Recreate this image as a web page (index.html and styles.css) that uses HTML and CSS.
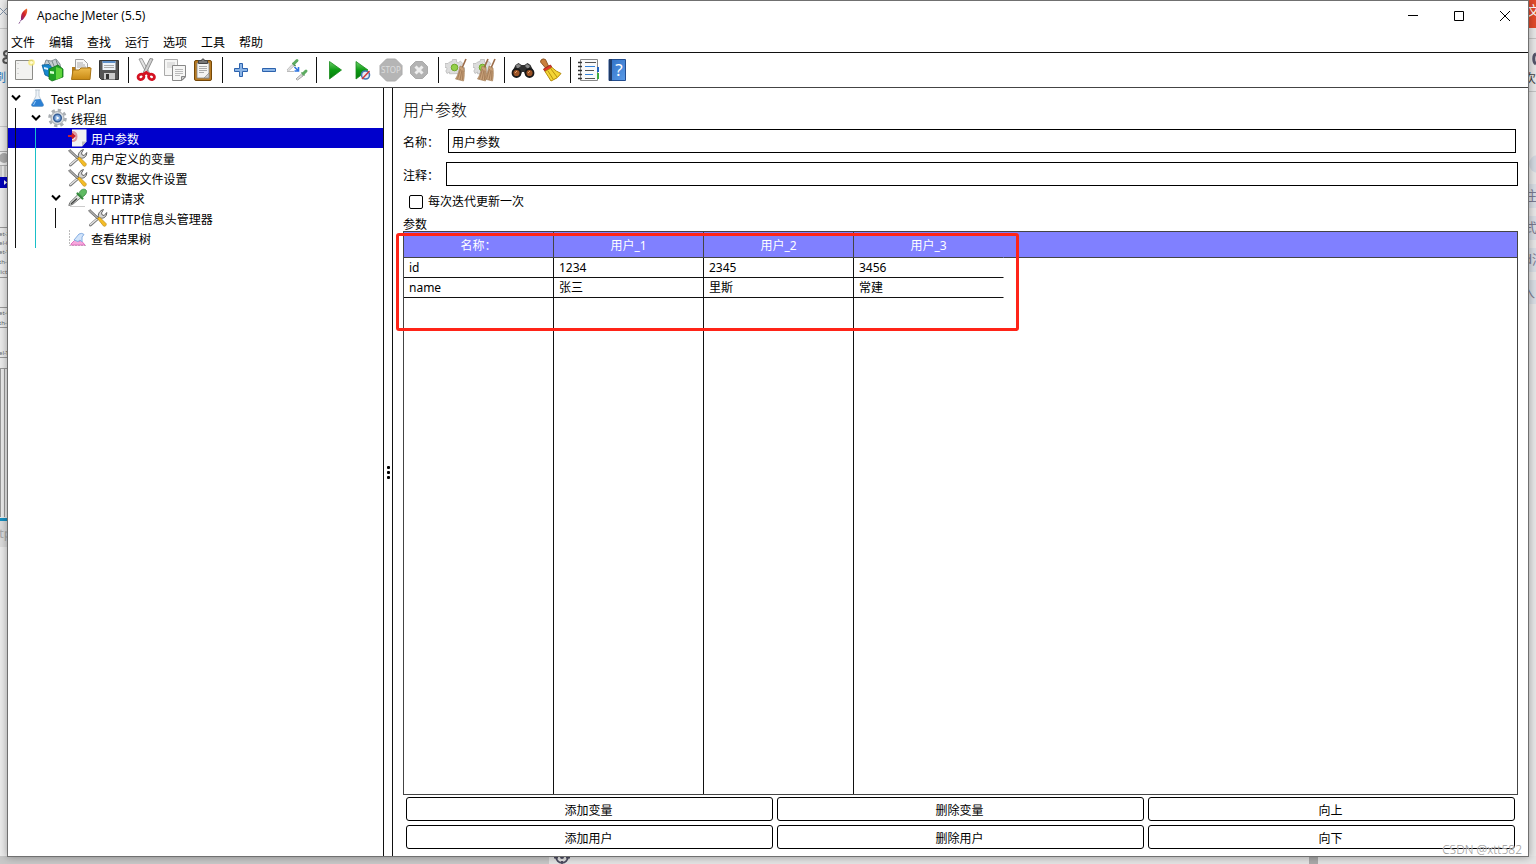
FILE: index.html
```html
<!DOCTYPE html>
<html lang="zh-CN">
<head>
<meta charset="utf-8">
<title>Apache JMeter (5.5)</title>
<link rel="stylesheet" href="styles.css">
</head>
<body>
<svg class="defs" aria-hidden="true">
  <defs>
    <linearGradient id="g-green" x1="0" y1="0" x2="0" y2="1"><stop offset="0" stop-color="#6fcf6a"/><stop offset=".5" stop-color="#0b9a12"/><stop offset="1" stop-color="#067a0c"/></linearGradient>
    <linearGradient id="g-folder" x1="0" y1="0" x2="0" y2="1"><stop offset="0" stop-color="#eebb4c"/><stop offset="1" stop-color="#c98a14"/></linearGradient>
    <linearGradient id="g-book" x1="0" y1="0" x2="1" y2="1"><stop offset="0" stop-color="#2f6fc4"/><stop offset="1" stop-color="#5a9be8"/></linearGradient>
    <linearGradient id="g-feather" x1="0" y1="1" x2="1" y2="0"><stop offset="0" stop-color="#7a2a86"/><stop offset=".5" stop-color="#d22128"/><stop offset="1" stop-color="#f0772a"/></linearGradient>
    <symbol id="i-tools" viewBox="0 0 20 20">
      <path d="M2.500 17 11 9.500" stroke="#777" stroke-width="3" stroke-linecap="round"/>
      <path d="M2.500 16.500 11.500 9" stroke="#e4e4e4" stroke-width="1.500" stroke-linecap="round"/>
      <path d="M10.500 9.500c-1-3 1-7 5-8l-2 3.500.7 2 2 .5 2.500-3c.3 4-3 6.500-6.500 5.500z" fill="#d4d4d4" stroke="#555" stroke-width=".9"/>
      <path d="M.5 3 2 1.500l8.500 8L9.300 11z" fill="#aaa" stroke="#555" stroke-width=".7"/>
      <path d="m9.500 10.500 2-1.500 6.500 6.500c1 1.500-1 3.700-2.500 2.500z" fill="#f5bd25" stroke="#b98a18" stroke-width=".7"/>
    </symbol>
    <symbol id="i-dropper" viewBox="0 0 20 20">
      <path d="M2 18.500h15" stroke="#ccc"/>
      <path d="m.8 17.500 1-3L10 6.500l3 3-8.500 7z" fill="#e3e7e3" stroke="#666" stroke-width=".9"/>
      <path d="m3 16 6-5.500" stroke="#444" stroke-width="1.600"/>
      <path d="m9.500 5.500 5 5" stroke="#348a3c" stroke-width="2.200" stroke-linecap="round"/>
      <path d="M11 5.500C12 2 15 .5 17.300 1.500s1.500 5-2.800 7.500z" fill="#5fbb62" stroke="#398640" stroke-width=".8"/>
    </symbol>
    <symbol id="i-broom" viewBox="0 0 24 24">
      <path d="m21 1-4 9" stroke="#9a6a46" stroke-width="1.600"/>
      <path d="m15 8 4 2c.5 4 .5 9-.5 13l-8-2c2.500-4 3.500-8 4.500-13z" fill="#c8a078" stroke="#a07850" stroke-width=".6"/>
      <path d="m15.500 11-3 10M17 12l-2 10M18 13l-.5 9" stroke="#8e6846" stroke-width=".6"/>
    </symbol>
    <symbol id="i-cog" viewBox="0 0 24 24">
      <g fill="#dcdcdc" stroke="#b4b4b4" stroke-width=".7"><path d="M7.500 1.500h4V4l2 .8 1.800-1.800 2.700 2.700-1.800 1.800.8 2h2.500v4H17l-.8 2-11.700.3L4.500 14 2 15.500.8 13 2 11l-.5-1.500H0v-4h3L4.500 4 7 3.500z"/></g>
      <circle cx="9.500" cy="9.500" r="3.300" fill="#93cf4a" stroke="#6fa82a"/>
    </symbol>
  </defs>
</svg>

<div class="desktop">
  <svg class="edge edge-left" width="8" height="864" aria-hidden="true">
    <rect width="8" height="864" fill="#ececec"/>
    <path d="M0 28.500h8M0 126.500h8" stroke="#c8c8c8"/>
    <path d="M0 8 7 15M7 8 0 15" stroke="#8192a8"/>
    <path d="M7 51c-4 0-4 5 0 5M7 58c-5 0-5 5 0 5" fill="none" stroke="#555" stroke-width="2"/>
    <text x="-6" y="82" font-size="12" fill="#2d7fc0">刷</text>
    <circle cx="4" cy="158" r="5" fill="#aaa"/>
    <path d="M0 151.500h8M0 165.500h8M1 166v11M5 166v11" stroke="#aaa"/>
    <rect y="177" width="8" height="11" fill="#0000b8"/><path d="m4 180 3 2.500-3 2.500z" fill="#fff"/>
    <g font-size="6" fill="#666"><text x="-1" y="236">et-X</text><text x="-1" y="245">el-C</text><text x="-1" y="254">et-V</text><text x="-1" y="264">th-C</text><text x="-1" y="274">lict</text><text x="-1" y="315">et-C</text><text x="-1" y="325">th-C</text><text x="-1" y="355">el-T</text></g>
    <path d="M0 227.500h8M0 277.500h8M0 307.500h8M0 327.500h8M0 357.500h8M0 368.500h8M.5 369v148M4.500 369v148" stroke="#999"/>
    <rect y="518" width="8" height="3" fill="#168fc0"/>
    <rect y="521" width="8" height="26" fill="#dcdcdc"/>
    <text x="-1" y="538" font-size="13" fill="#aaa">tp</text>
  </svg>
  <svg class="edge edge-right" width="8" height="864" aria-hidden="true">
    <rect width="8" height="864" fill="#e8e8e8"/>
    <rect width="8" height="28" fill="#e24a2b"/>
    <text x="-1" y="15" font-size="13" fill="#fff">文</text>
    <path d="M0 38.500h8M0 91.500h8" stroke="#c4c4c4"/>
    <path d="M8 54c-3 1-3 8 0 10" fill="none" stroke="#55556a" stroke-width="3"/>
    <text x="-4" y="83" font-size="12" fill="#444">次</text>
    <circle cx="10" cy="164" r="9" fill="#d4dae2"/>
    <path d="M0 184h8v24H0zM0 216h8v24H0zM0 248h8v24H0zM0 280h8v24H0z" fill="#d9dee5"/>
    <g font-size="13" fill="#7b7b92"><text x="-4" y="200">注</text><text x="-4" y="232">式</text><text x="-4" y="264">d消</text><text x="-6" y="297">入</text></g>
  </svg>
  <div class="edge-bottom" aria-hidden="true">
    <div class="dock"><svg width="16" height="8" viewBox="0 0 16 8"><path d="M2 0c0 9 12 9 12 0M0 1.500h4M12 1.500h4M8 5v3" fill="none" stroke="#4c4c60" stroke-width="2"/><circle cx="8" cy="1" r="2" fill="#4c4c60"/></svg></div>
    <div class="dock-mark"></div>
  </div>

  <main class="window">
    <header class="titlebar">
      <svg class="logo" viewBox="0 0 14 18"><path d="M5 13c-.5-5 1-9 6-11.500 1 4-1.500 8-4.500 11.500z" fill="url(#g-feather)"/><path d="m3 16.500 2.500-4" stroke="#6a2b78" stroke-dasharray="1.500 1"/></svg>
      <h1 class="caption">Apache JMeter (5.5)</h1>
      <div class="window-controls">
        <button type="button" aria-label="最小化"><svg viewBox="0 0 12 12"><path d="M1 5.500h10"/></svg></button>
        <button type="button" aria-label="最大化"><svg viewBox="0 0 12 12"><path d="M1.500 1.500h9v9h-9z"/></svg></button>
        <button type="button" aria-label="关闭"><svg viewBox="0 0 12 12"><path d="m1 1 10 10M11 1 1 11"/></svg></button>
      </div>
    </header>

    <nav class="menubar">
      <button type="button">文件</button><button type="button">编辑</button><button type="button">查找</button><button type="button">运行</button><button type="button">选项</button><button type="button">工具</button><button type="button">帮助</button>
    </nav>

    <div class="toolbar" role="toolbar">
      <button type="button" aria-label="新建"><svg viewBox="0 0 24 24"><path d="M2.500 2.500h17v19h-17z" fill="#f2f2f0" stroke="#8c8c88"/><path d="M5 5v15" stroke="#bbb" stroke-dasharray="1 4"/><circle cx="18.500" cy="4.500" r="3.300" fill="#f6e76a" opacity=".75"/><circle cx="18.500" cy="4.500" r="1.600" fill="#fffbd0"/></svg></button>
      <button type="button" aria-label="模板"><svg viewBox="0 0 24 24"><path d="m3 8 2-6 5 1 5-2 4 5 1 6H4z" fill="#c5cdd2" stroke="#6d7a82" stroke-width=".8"/><path d="m7 3 3 5M11 3l2 5M15 2l2 6" stroke="#778888"/><path d="m1 7 7-.5 3 3V20l-7-3z" fill="#1687cf" stroke="#0a5b94" stroke-width=".8"/><path d="m3 9 4 1v2l-4-1z" fill="#d8efff"/><path d="m8 11 9-4 5 4v8l-11 4-3-2z" fill="#1fa024" stroke="#14741a" stroke-width=".8"/><path d="m15 9 6 2v8l-6 3z" fill="#5fd53c"/><path d="m9 13 4 .5V16l-4-.5z" fill="#d7ffd0"/></svg></button>
      <button type="button" aria-label="打开"><svg viewBox="0 0 24 24"><path d="M3 9h18v12H3z" fill="#b67c1c"/><path d="M6.500 1.500h8l4 4V14h-12z" fill="#f7f7f7" stroke="#888" stroke-width=".8"/><path d="M8 5h6M8 7h8M8 9h9" stroke="#aaa"/><path d="M2.500 21.500 4 12h6l2-2h10l-1 11.500z" fill="url(#g-folder)" stroke="#a87415"/></svg></button>
      <button type="button" aria-label="保存"><svg viewBox="0 0 24 24"><path d="M2.500 2.500h19v19h-17l-2-2z" fill="#555" stroke="#333"/><path d="M5.500 3h13v9h-13z" fill="#eef3f8"/><path d="M5.500 3h13v2h-13z" fill="#5d8fc8"/><path d="M7 7.500h10M7 9.500h10" stroke="#aaa"/><path d="M7 15h11v6.500H7z" fill="#ccc"/><path d="M9 16h3v5H9z" fill="#333"/></svg></button>
      <span class="sep"></span>
      <button type="button" aria-label="剪切"><svg viewBox="0 0 24 24"><path d="m4 1 3-.5L14.500 15 12 16.500z" fill="#e4e4e4" stroke="#888" stroke-width=".8"/><path d="m18 1-3-.5L8 15l2.500 1.500z" fill="#d0d0d0" stroke="#777" stroke-width=".8"/><g fill="none" stroke="#d41222" stroke-width="2.800"><ellipse cx="6" cy="18.800" rx="3" ry="2.600" transform="rotate(-25 6 18.800)"/><ellipse cx="16.500" cy="18.800" rx="3" ry="2.600" transform="rotate(25 16.500 18.800)"/><path d="m7.500 17 3.800-2.500L15 17"/></g></svg></button>
      <button type="button" aria-label="复制"><svg viewBox="0 0 24 24"><path d="M1.500 1.500h13v16h-13z" fill="#f6f6f5" stroke="#aaa"/><path d="M4 5h8M4 7h8M4 9h5" stroke="#ccc"/><path d="M9.500 7.500h13V19L19 22.500H9.500z" fill="#f6f6f5" stroke="#888"/><path d="M12 11.500h8M12 13.500h8M12 15.500h8M12 17.500h5" stroke="#bbb"/><path d="M22.500 18.500h-4v4z" fill="#ccc" stroke="#888"/></svg></button>
      <button type="button" aria-label="粘贴"><svg viewBox="0 0 24 24"><rect x="3.500" y="2.500" width="17" height="20" rx="1.500" fill="#b77a22" stroke="#744808"/><path d="M6 5h12v15H6z" fill="#f4f4f2" stroke="#888" stroke-width=".8"/><path d="M8 8.500h8M8 10.500h8M8 12.500h8M8 14.500h5" stroke="#aaa"/><path d="M7.500 5.500v-3h3c0-2 3-2 3 0h3v3z" fill="#777" stroke="#444"/><path d="M18 15v5h-5z" fill="#ccc" stroke="#888" stroke-width=".7"/></svg></button>
      <span class="sep"></span>
      <button type="button" aria-label="展开"><svg viewBox="0 0 24 24"><path d="M10.500 5.500h3v5h5v3h-5v5h-3v-5h-5v-3h5z" fill="#8ab4e6" stroke="#2c62ad"/></svg></button>
      <button type="button" aria-label="折叠"><svg viewBox="0 0 24 24"><path d="M5.500 10.500h13v3h-13z" fill="#8ab4e6" stroke="#2c62ad"/></svg></button>
      <button type="button" aria-label="切换"><svg viewBox="0 0 24 24"><path d="m2 12 5-5.500L9 8l-5.500 5z" fill="#e2e2e2" stroke="#b0b0b0" stroke-width=".7"/><path d="m7.500 5 3 3" stroke="#438746" stroke-width="1.500"/><path d="m9 5.500 3-3" stroke="#5cab60" stroke-width="3" stroke-linecap="round"/><path d="M2 13.500h7" stroke="#bbb"/><path d="m9.500 9 4 4m0-4v4h-4" fill="none" stroke="#2f74e0" stroke-width="1.600"/><path d="m11 21 5-4.500 2 1.500-5.500 4z" fill="#e2e2e2" stroke="#888" stroke-width=".7"/><path d="m16.500 14.500 3 3" stroke="#438746" stroke-width="1.500"/><path d="m18.500 15.500 2.500-2.500" stroke="#5cab60" stroke-width="3" stroke-linecap="round"/></svg></button>
      <span class="sep"></span>
      <button type="button" aria-label="启动"><svg viewBox="0 0 24 24"><path d="m6.500 3.500 12 8.500-12 9z" fill="url(#g-green)" stroke="#188c1c" stroke-width=".8"/></svg></button>
      <button type="button" aria-label="不停顿开始"><svg viewBox="0 0 24 24"><path d="m5 3.500 12 8.500-12 9z" fill="url(#g-green)" stroke="#188c1c" stroke-width=".8"/><circle cx="14.500" cy="17" r="4" fill="#e6edf6" stroke="#4676b5" stroke-width="1.600"/><path d="m11 21 7.500-8" stroke="#d33838" stroke-width="1.500"/></svg></button>
      <button type="button" aria-label="停止" disabled><svg viewBox="0 0 24 24"><path d="M7.500 1h9L23 7.500v9L16.500 23h-9L1 16.500v-9z" fill="#b5b5b5" stroke="#aaa"/><text x="12" y="15" text-anchor="middle" font-size="8" fill="#dddddd">STOP</text></svg></button>
      <button type="button" aria-label="关闭线程" disabled><svg viewBox="0 0 24 24"><path d="M8.500 3.500h7l5 5v7l-5 5h-7l-5-5v-7z" fill="#b3b3b3" stroke="#aaa"/><path d="m8.500 8.500 7 7m0-7-7 7" stroke="#eee" stroke-width="3"/></svg></button>
      <span class="sep"></span>
      <button type="button" aria-label="清除"><svg viewBox="0 0 24 24"><use href="#i-cog" width="24" height="24"/><use href="#i-broom" width="24" height="24"/></svg></button>
      <button type="button" aria-label="清除全部"><svg viewBox="0 0 24 24"><use href="#i-cog" width="24" height="24"/><use href="#i-broom" x="-6" width="24" height="24"/><use href="#i-broom" x="1" width="24" height="24"/></svg></button>
      <span class="sep"></span>
      <button type="button" aria-label="搜索"><svg viewBox="0 0 24 24"><path d="M1 14 4.500 7l3-2 3 2h3l3-2 3 2 3.500 7v3l-8 1-2-4h-2l-2 4-8-1z" fill="#303030"/><path d="m5 7 3-1 2 2-4 3zM14 8l2-2 3 2-2 3z" fill="#888"/><circle cx="5.500" cy="15" r="4" fill="#9a5225" stroke="#181818" stroke-width="1.800"/><circle cx="18.500" cy="15" r="4" fill="#9a5225" stroke="#181818" stroke-width="1.800"/><path d="m4 15 2-2m11 2 2-2" stroke="#eaa36b"/></svg></button>
      <button type="button" aria-label="重置搜索"><svg viewBox="0 0 24 24"><path d="M2 2q2-2 4.500-.5l3 6.500-3 2-5-6z" fill="#c9803e" stroke="#7e4617" stroke-width=".8"/><path d="m4.500 11 7-4 1.500 2.500-7 4z" fill="#e03a28" stroke="#981b10" stroke-width=".8"/><path d="m6 13.500 7-4q4 4 9 6-3 5-10 7.500-3-5-6-9.500z" fill="#f4d535" stroke="#b58c0d"/><path d="m9 13 5 8m-2-10 6 8" stroke="#b9920c"/></svg></button>
      <span class="sep"></span>
      <button type="button" aria-label="函数助手"><svg viewBox="0 0 24 24"><path d="M3.500 1.500h17v21h-17z" fill="#fafafa" stroke="#888"/><path d="M1 4.500h4M1 8.500h4M1 12.500h4M1 16.500h4M1 20.500h4" stroke="#333" stroke-width="1.500"/><path d="M8 4.500h11M8 12.500h9M8 20.500h10" stroke="#555"/><path d="M8 8.500h10M8 16.500h8" stroke="#3483dc"/><path d="M21 9v5" stroke="#2464c0" stroke-width="2"/><path d="M21 15v6" stroke="#3bab3d" stroke-width="2"/></svg></button>
      <button type="button" aria-label="帮助"><svg viewBox="0 0 24 24"><path d="M4 1.500h16.500v21H4z" fill="url(#g-book)" stroke="#224d8f"/><path d="M4 1h3v22H4z" fill="#203b68"/><text x="14" y="18" text-anchor="middle" font-size="17" fill="#fff">?</text></svg></button>
    </div>

    <div class="workspace">
      <ul class="tree" role="tree">
        <li class="node" role="treeitem"><svg class="arrow" viewBox="0 0 20 20"><path d="m4 7.500 4 4 4-4"/></svg><svg class="icon" viewBox="0 0 20 20"><path d="M7 2h5M8 2v6l-4.500 8.500q-.5 2 1.500 2h9q2 0 1.500-2L11 8V2" fill="#eef3f8" stroke="#b4c0cc" stroke-width=".8"/><path d="m7 11.500 5.500-.5 3 5.500q.5 2-1.500 2H5q-2 0-1.500-2z" fill="#2d80d2"/><path d="m7.500 13-2 4" stroke="#9dd0ff"/></svg><span>Test Plan</span></li>
        <li class="node" role="treeitem"><i class="guide"></i><svg class="arrow" viewBox="0 0 20 20"><path d="m4 7.500 4 4 4-4"/></svg><svg class="icon" viewBox="0 0 20 20"><circle cx="9.500" cy="10" r="8" fill="none" stroke="#a9aeb3" stroke-width="2.600" stroke-dasharray="3.300 2.983"/><circle cx="9.500" cy="10" r="6.500" fill="#d8dcdf" stroke="#a4a9ae"/><circle cx="9.500" cy="10" r="3.800" fill="#7ba6dc" stroke="#375f97" stroke-width="1.500"/><path d="m8.500 8 3 2-3 2z" fill="#fff"/></svg><span>线程组</span></li>
        <li class="node selected" role="treeitem" aria-selected="true"><i class="guide"></i><i class="guide cyan"></i><i class="arrow"></i><svg class="icon" viewBox="0 0 20 20"><path d="M4 1.500h14.500v12L14 18.500H4z" fill="#f2f2f2"/><path d="M18.500 13.500H14v5z" fill="#bbb"/><path d="M4 4q4.500 0 4.500 4.500T4 13" fill="none" stroke="#dc9a9a" stroke-width="2"/><path d="M0 8h6M4 5.500 6.500 8 4 10.500" fill="none" stroke="#c8212b" stroke-width="2"/></svg><span>用户参数</span></li>
        <li class="node" role="treeitem"><i class="guide"></i><i class="guide cyan"></i><i class="arrow"></i><svg class="icon"><use href="#i-tools"/></svg><span>用户定义的变量</span></li>
        <li class="node" role="treeitem"><i class="guide"></i><i class="guide cyan"></i><i class="arrow"></i><svg class="icon"><use href="#i-tools"/></svg><span>CSV 数据文件设置</span></li>
        <li class="node" role="treeitem"><i class="guide"></i><i class="guide cyan"></i><svg class="arrow" viewBox="0 0 20 20"><path d="m4 7.500 4 4 4-4"/></svg><svg class="icon"><use href="#i-dropper"/></svg><span>HTTP请求</span></li>
        <li class="node" role="treeitem"><i class="guide"></i><i class="guide cyan"></i><i class="guide"></i><i class="arrow"></i><svg class="icon"><use href="#i-tools"/></svg><span>HTTP信息头管理器</span></li>
        <li class="node" role="treeitem"><i class="guide"></i><i class="guide cyan"></i><i class="arrow"></i><svg class="icon" viewBox="0 0 20 20"><path d="M1.500 2v15.500H18" fill="none" stroke="#bbb" stroke-dasharray="2 1"/><path d="m3 16 5-5 3 2.500 2-1 4 4.500H3z" fill="#f6a8dc" stroke="#e070c0"/><path d="m6 12 5-6q3-1.500 5 .5L14 9v5l-2-2-2 1.500z" fill="#d2e4fa" stroke="#86aee2"/></svg><span>查看结果树</span></li>
      </ul>

      <div class="splitter" role="separator"><i></i><i></i><i></i></div>

      <form class="panel">
        <h2 class="panel-title">用户参数</h2>
        <div class="field name-field"><label for="name">名称：</label><input id="name" type="text" value="用户参数"></div>
        <div class="field comment-field"><label for="comment">注释：</label><input id="comment" type="text"></div>
        <label class="check"><input type="checkbox">每次迭代更新一次</label>
        <div class="legend">参数</div>
        <div class="table-box">
          <table>
            <thead><tr><th>名称：</th><th>用户_1</th><th>用户_2</th><th>用户_3</th><th class="rest"></th></tr></thead>
            <tbody>
              <tr><td>id</td><td>1234</td><td>2345</td><td>3456</td><td class="rest"></td></tr>
              <tr><td>name</td><td>张三</td><td>里斯</td><td>常建</td><td class="rest"></td></tr>
              <tr class="fill"><td></td><td></td><td></td><td></td><td class="rest"></td></tr>
            </tbody>
          </table>
          <div class="highlight"></div>
        </div>
        <div class="actions">
          <button type="button">添加变量</button><button type="button">删除变量</button><button type="button">向上</button>
          <button type="button">添加用户</button><button type="button">删除用户</button><button type="button">向下</button>
        </div>
      </form>
    </div>
  </main>
  <div class="watermark">CSDN @xtt582</div>
</div>
</body>
</html>
```
FILE: styles.css
```css
* { box-sizing: border-box; }

body {
  margin: 0;
  color: #000;
  font: 12px/20px "Noto Sans", "Noto Sans CJK SC", sans-serif;
}

button, input { font: inherit; color: inherit; }
h1, h2, ul { margin: 0; padding: 0; font-weight: normal; }
.defs { position: absolute; width: 0; height: 0; }

.desktop {
  position: relative;
  display: flex;
  height: 100vh;
  padding: 0 7px 7px;
  overflow: hidden;
  background: #e8e8e8;
}

/* Slivers of the windows behind */
.edge { position: absolute; top: 0; }
.edge-left { left: 0; }
.edge-right { right: 0; }
.edge-bottom {
  position: absolute;
  inset: auto 0 0;
  display: flex;
  justify-content: space-between;
  height: 8px;
  padding-right: 218px;
  background: #e4e4e4;
}
.dock { width: 570px; background: linear-gradient(90deg, #c8c8c8 549px, transparent 549px); }
.dock svg { display: block; margin-left: auto; }
.dock-mark { width: 9px; background: #aaa; }

.window {
  position: relative;
  display: flex;
  flex: 1;
  flex-direction: column;
  min-width: 0;
  border: 1px solid #707070;
  background: #fff;
  box-shadow: 0 0 8px rgba(0, 0, 0, .35);
}

.titlebar { display: flex; align-items: center; height: 30px; padding-left: 8px; }
.logo { width: 14px; height: 18px; margin-right: 7px; }
.caption { font-family: "Open Sans", sans-serif; font-size: 12px; }
.window-controls { display: flex; margin-left: auto; }
.window-controls button {
  width: 46px;
  height: 28px;
  padding: 0;
  border: 0;
  background: none;
}
.window-controls svg { display: block; width: 12px; height: 12px; margin: auto; fill: none; stroke: #000; }

.menubar { display: flex; gap: 14px; height: 22px; padding-left: 3px; border-bottom: 1px solid #111; }
.menubar button { padding: 2px 0 0; border: 0; background: none; }

.toolbar { display: flex; align-items: center; height: 35px; padding-left: 3px; border-bottom: 1px solid #444; }
.toolbar button { width: 28px; height: 28px; padding: 2px; border: 0; background: none; }
.toolbar svg { display: block; width: 24px; height: 24px; overflow: visible; }
.sep { width: 1px; height: 26px; margin: 0 4px 0 5px; background: #111; }

.workspace { display: flex; flex: 1; min-height: 0; }

.tree { flex: 0 0 375px; list-style: none; }
.node { display: flex; height: 20px; line-height: 23px; white-space: nowrap; }
.node span { margin-left: 3px; }
.selected { color: #fff; background: #0000cc; }
.guide { width: 20px; border: solid #111; border-width: 0 0 0 1px; margin-left: 7px; margin-right: -7px; }
.cyan { border-color: #19bfc8; }
.arrow { width: 20px; height: 20px; fill: none; stroke: #000; stroke-width: 2; }
.icon { width: 20px; height: 20px; }

.splitter {
  display: flex;
  flex: 0 0 10px;
  flex-direction: column;
  align-items: center;
  justify-content: center;
  gap: 2px;
  border: solid #111;
  border-width: 0 1px;
}
.splitter i { width: 3px; height: 3px; border-radius: 1px; background: #000; }

.panel { display: flex; flex: 1; flex-direction: column; min-width: 0; padding: 10px 10px 7px; }
.panel-title { margin-bottom: 7px; font-size: 16px; font-weight: 300; line-height: 24px; }
.field { display: flex; align-items: center; margin-bottom: 9px; }
.field label { flex: none; padding-top: 3px; }
.field input {
  flex: 1;
  min-width: 0;
  height: 24px;
  padding: 2px 3px 0;
  border: 1px solid #000;
  border-radius: 0;
  background: #fff;
}
.name-field { padding-right: 2px; }
.name-field label { width: 45px; }
.comment-field label { width: 43px; }
.check { display: flex; align-items: center; align-self: flex-start; height: 14px; margin-bottom: 6px; padding-left: 6px; line-height: 16px; }
.check input {
  appearance: none;
  width: 14px;
  height: 14px;
  margin: 0 5px 0 0;
  border: 1px solid #000;
  border-radius: 2px;
}
.legend { height: 16px; line-height: 20px; }

.table-box { position: relative; flex: 1; min-height: 0; border: 1px solid #444; }
table { width: 100%; height: 100%; border-spacing: 0; table-layout: fixed; }
th, td { width: 150px; border: solid #111; border-width: 0 1px 1px 0; line-height: 18px; }
th { height: 26px; padding: 3px 0 0; border-color: #444; color: #fff; background: #8080ff; font-weight: normal; }
td { height: 20px; padding: 1px 5px 0; }
th:nth-child(4), td:nth-child(4) { border-right-color: transparent; }
th:nth-child(4) { border-right-color: #8080ff; }
.rest { width: auto; border-right: 0; }
td.rest, .fill td { border-bottom: 0; }
.fill td { height: auto; }
.highlight {
  position: absolute;
  top: 1px;
  left: -8px;
  width: 623px;
  height: 98px;
  border: 3px solid #ff2418;
  border-radius: 3px;
  pointer-events: none;
}

.actions { display: grid; grid-template-columns: repeat(3, 1fr); gap: 4px; padding: 2px 3px 0; }
.actions button { height: 24px; padding: 3px 2px 0 0; border: 1px solid #000; border-radius: 3px; background: #fff; line-height: 20px; }

.watermark {
  position: absolute;
  right: 14px;
  bottom: 4px;
  color: #999;
  font-weight: 300;
  line-height: 20px;
  text-shadow: 0 0 1px #fff;
}
```
